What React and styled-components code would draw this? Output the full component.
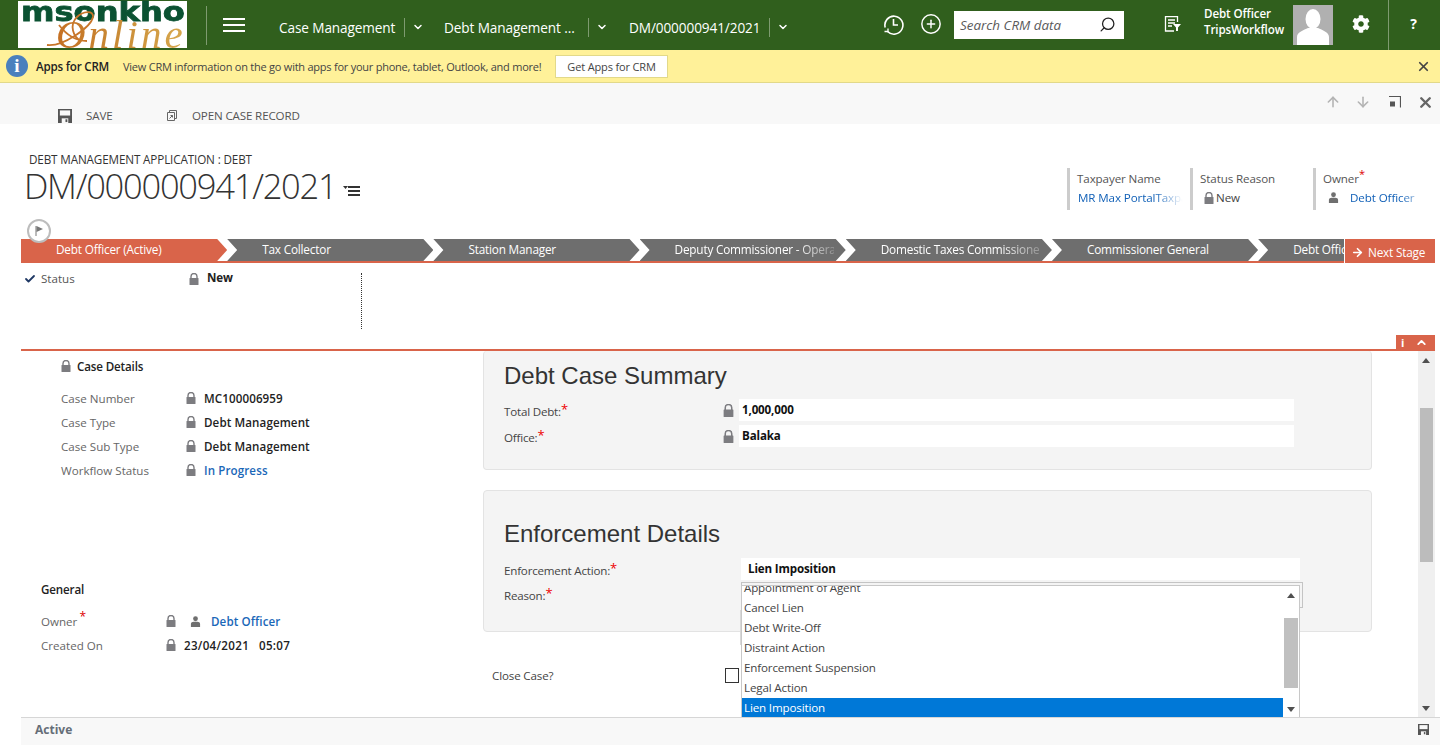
import styled, { createGlobalStyle } from "styled-components";
import { ArrowDown, ArrowRight, ArrowUp, Check, ChevronDown, ChevronUp, CirclePlus, Search, X } from "lucide-react";
import { FaCog } from "react-icons/fa";

const GlobalStyle = createGlobalStyle`
  html, body {
    margin: 0;
    padding: 0;
    background: #fff;
    overflow: hidden;
  }
  * {
    box-sizing: border-box;
  }
`;

const Page = styled.div`
  height: 100vh;
  display: flex;
  flex-direction: column;
  font-family: "Open Sans", "Liberation Sans", sans-serif;
  font-size: 11.6px;
  color: #444;
  position: relative;
`;

/* top nav */
const NavBar = styled.div`
  height: 50px;
  flex: none;
  background: #305f1d;
  display: flex;
  align-items: center;
  color: #fff;
`;

const Logo = styled.div`
  width: 169px;
  height: 47px;
  margin: 0 19px 1px 18px;
  background: #fff;
  position: relative;
  flex: none;
`;

const LogoTop = styled.span`
  position: absolute;
  left: 3px;
  top: 0;
  font-family: "DejaVu Sans", sans-serif;
  font-weight: 700;
  font-size: 27px;
  line-height: 22px;
  letter-spacing: 0;
  color: #0b5232;
  -webkit-text-stroke: 0.8px #0b5232;
  transform: scaleX(1.19);
  transform-origin: left center;
`;

const LogoScript = styled.span`
  position: absolute;
  left: 38px;
  top: 11px;
  height: 36px;
  font-family: "Liberation Serif", serif;
  font-style: italic;
  font-size: 41px;
  letter-spacing: 3px;
  line-height: 44px;
  background: linear-gradient(90deg, #c56f22, #c98a35 45%, #d8a94e);
  -webkit-background-clip: text;
  background-clip: text;
  color: transparent;
`;

const LogoSwoosh = styled.svg`
  position: absolute;
  left: 25px;
  top: 10px;
`;

const NavDivider = styled.div`
  width: 1px;
  height: 39px;
  background: #7e9b70;
  flex: none;
`;

const Burger = styled.div`
  width: 22px;
  height: 14px;
  margin: 0 34px 0 16px;
  border-top: 2px solid #fff;
  border-bottom: 2px solid #fff;
  position: relative;
  flex: none;
  &::after {
    content: "";
    position: absolute;
    left: 0;
    right: 0;
    top: 4px;
    height: 2px;
    background: #fff;
  }
`;

const Crumb = styled.div`
  width: ${(p) => p.$w}px;
  flex: none;
  font-size: 13.6px;
  display: flex;
  align-items: center;
  padding-top: 4px;
  white-space: nowrap;
  span {
    width: ${(p) => p.$text}px;
    letter-spacing: -0.1px;
  }
  i {
    width: 1px;
    height: 19px;
    background: #7e9b70;
    margin-right: 7px;
  }
`;

const NavIcon = styled.div`
  width: ${(p) => p.$w || 38}px;
  display: flex;
  align-items: center;
  justify-content: center;
  flex: none;
  margin-bottom: 2px;
`;

const SearchBox = styled.div`
  width: 170px;
  height: 28px;
  margin: 0 30px 1px 4px;
  background: #fff;
  color: #5a5a5a;
  font-style: italic;
  font-size: 13.4px;
  display: flex;
  align-items: center;
  justify-content: space-between;
  padding: 0 8px 0 6px;
  flex: none;
  svg {
    transform: scaleX(-1);
    color: #222;
  }
`;

const UserName = styled.div`
  width: 89px;
  margin-left: 12px;
  font-size: 11.6px;
  font-weight: 600;
  line-height: 16px;
  margin-bottom: 7px;
  letter-spacing: -0.1px;
  white-space: nowrap;
`;

const Avatar = styled.div`
  width: 40px;
  height: 40px;
  background: #b0b0b0;
  flex: none;
  overflow: hidden;
`;

const HelpCell = styled.div`
  width: 52px;
  height: 50px;
  border-left: 1px solid #7e9b70;
  display: flex;
  align-items: center;
  justify-content: center;
  font-weight: 700;
  font-size: 14px;
  padding-bottom: 4px;
  padding-right: 2px;
`;

/* notification bar */
const NoticeBar = styled.div`
  height: 33px;
  flex: none;
  background: #fff199;
  border-bottom: 1px solid #e2d98a;
  display: flex;
  align-items: center;
  padding-left: 6px;
  color: #444;
`;

const InfoDot = styled.div`
  width: 22px;
  height: 22px;
  border-radius: 50%;
  background: #4a80bd;
  color: #fff;
  font-family: "Liberation Serif", serif;
  font-weight: 700;
  font-size: 19px;
  line-height: 22px;
  text-align: center;
  flex: none;
`;

const NoticeTitle = styled.b`
  width: 87px;
  margin-left: 8px;
  flex: none;
  font-weight: 600;
  color: #222;
  letter-spacing: -0.2px;
  white-space: nowrap;
`;

const NoticeText = styled.span`
  width: 432px;
  flex: none;
  font-size: 11px;
  letter-spacing: -0.24px;
  white-space: nowrap;
`;

const NoticeButton = styled.div`
  width: 113px;
  height: 23px;
  background: #fff;
  border: 1px solid #e2d98a;
  display: flex;
  align-items: center;
  justify-content: center;
  font-size: 11px;
  letter-spacing: -0.15px;
  flex: none;
`;

const NoticeClose = styled(X)`
  margin-left: auto;
  margin-right: 9px;
  color: #444;
`;

/* command bar */
const CommandBar = styled.div`
  height: 41px;
  flex: none;
  background: #f8f8f8;
  display: flex;
  align-items: center;
  padding: 24px 6px 0 58px;
`;

const Command = styled.div`
  display: flex;
  align-items: center;
  width: ${(p) => p.$w}px;
  font-size: 11.6px;
  color: #555;
  white-space: nowrap;
  letter-spacing: -0.15px;
  svg {
    margin-right: ${(p) => p.$gap}px;
    flex: none;
  }
`;

const CommandRight = styled.div`
  margin-left: auto;
  margin-top: -27px;
  display: flex;
  align-items: center;
  gap: 14px;
  color: #b4b4b4;
`;

/* record header */
const RecordHeader = styled.div`
  height: 115px;
  flex: none;
  display: flex;
  padding: 28px 0 0 25px;
`;

const TitleBlock = styled.div`
  flex: 1;
`;

const EntityName = styled.div`
  font-size: 11.7px;
  line-height: 14px;
  margin-left: 4px;
  color: #333;
  letter-spacing: -0.14px;
  text-transform: uppercase;
`;

const RecordTitle = styled.h1`
  margin: 0 0 0 -1px;
  display: flex;
  align-items: center;
  font-weight: 300;
  font-size: 34.5px;
  line-height: 40px;
  color: #333;
  letter-spacing: -1.25px;
`;

const TitleMenu = styled.svg`
  margin: 10px 0 0 7px;
`;

const HeaderFields = styled.div`
  display: flex;
  padding: 16px 4px 0 0;
  height: 58px;
`;

const HeaderField = styled.div`
  width: 123px;
  height: 42px;
  border-left: 3px solid #ccc;
  padding: 1px 0 0 7px;
  font-size: 11.6px;
  line-height: 19px;
  color: #555;
  letter-spacing: -0.1px;
  sup {
    color: #d00;
    line-height: 0;
    font-size: 11px;
  }
`;

const HeaderValue = styled.div`
  display: flex;
  align-items: center;
  gap: ${(p) => p.$gap || 0}px;
  color: ${(p) => (p.$link ? "#1160b7" : "#444")};
  padding-left: ${(p) => p.$inset || 0}px;
  width: 110px;
  white-space: nowrap;
  overflow: hidden;
  mask-image: ${(p) => (p.$fade ? "linear-gradient(90deg, #000 70%, transparent 96%)" : "none")};
  -webkit-mask-image: ${(p) => (p.$fade ? "linear-gradient(90deg, #000 70%, transparent 96%)" : "none")};
`;

/* stage bar */
const StageBar = styled.div`
  height: 24px;
  flex: none;
  margin: 0 5px 0 21px;
  display: flex;
  border-bottom: 2px solid #d9644a;
  position: relative;
`;

const FlagBadge = styled.div`
  position: absolute;
  left: 6px;
  top: -20px;
  width: 24px;
  height: 24px;
  border-radius: 50%;
  border: 2px solid #bdbdbd;
  background: #fff;
  display: flex;
  align-items: center;
  justify-content: center;
  z-index: 1;
`;

const Stages = styled.div`
  flex: 1;
  display: flex;
  overflow: hidden;
`;

const Stage = styled.div`
  width: 206.2px;
  flex: none;
  height: 22px;
  padding-left: 35px;
  background: ${(p) => (p.$active ? "#d9644a" : "#6e6e6e")};
  color: #fff;
  line-height: 21px;
  font-size: 11.8px;
  letter-spacing: -0.2px;
  white-space: nowrap;
  clip-path: ${(p) =>
    p.$active
      ? "polygon(0 0, calc(100% - 10px) 0, 100% 50%, calc(100% - 10px) 100%, 0 100%)"
      : "polygon(0 0, calc(100% - 10px) 0, 100% 50%, calc(100% - 10px) 100%, 0 100%, 10px 50%)"};
`;

const StageLabel = styled.div`
  width: 159px;
  overflow: hidden;
  mask-image: ${(p) => (p.$fade ? "linear-gradient(90deg, #000 75%, rgba(0,0,0,0.25) 100%)" : "none")};
  -webkit-mask-image: ${(p) => (p.$fade ? "linear-gradient(90deg, #000 75%, rgba(0,0,0,0.25) 100%)" : "none")};
`;

const NextStage = styled.div`
  width: 91px;
  height: 24px;
  margin-bottom: -2px;
  flex: none;
  background: #d9644a;
  border-left: 1px solid #fff;
  color: #fff;
  display: flex;
  align-items: center;
  padding: 2px 0 0 6px;
  gap: 4px;
  font-size: 11.8px;
  letter-spacing: -0.2px;
  white-space: nowrap;
`;

/* status strip */
const StatusStrip = styled.div`
  height: 88px;
  flex: none;
  margin: 0 5px 0 21px;
  border-bottom: 2px solid #d9644a;
  position: relative;
  padding-top: 9px;
`;

const StatusField = styled.div`
  width: 341px;
  height: 56px;
  margin-top: 1px;
  border-right: 1px dotted #333;
  display: flex;
  align-items: flex-start;
  padding-left: 3px;
  line-height: 12px;
  color: #555;
`;

const StatusLabel = styled.span`
  width: 148px;
  margin-left: 5px;
`;

const StatusValue = styled.b`
  margin-left: 8px;
  margin-top: -1px;
  font-weight: 700;
  color: #222;
  letter-spacing: -0.2px;
`;

const StripTabs = styled.div`
  position: absolute;
  right: 0;
  bottom: 0;
  width: 39px;
  height: 14px;
  background: #d9644a;
  color: #fff;
  display: flex;
  align-items: center;
  font-size: 11px;
  font-weight: 700;
  padding-left: 5px;
  gap: 11px;
`;

/* main area */
const Main = styled.div`
  flex: 1;
  min-height: 0;
  margin: 0 5px 0 21px;
  display: flex;
  overflow: hidden;
`;

const SideColumn = styled.div`
  width: 462px;
  flex: none;
`;

const SideSection = styled.div`
  padding-left: ${(p) => p.$inset}px;
  margin-top: ${(p) => p.$top}px;
`;

const SideHeading = styled.div`
  display: flex;
  align-items: center;
  gap: 6px;
  height: 16px;
  font-weight: 600;
  color: #222;
  margin-bottom: 12px;
  letter-spacing: -0.15px;
`;

const SideRow = styled.div`
  display: flex;
  align-items: center;
  height: 24px;
`;

const SideLabel = styled.div`
  width: 125px;
  flex: none;
  color: #666;
  sup {
    color: #d00;
    line-height: 0;
    font-size: 12px;
    margin-left: 2px;
  }
`;

const SideValue = styled.div`
  margin-left: ${(p) => p.$gap}px;
  font-weight: 600;
  letter-spacing: ${(p) => p.$track || 0.1}px;
  color: ${(p) => (p.$link ? "#1a67b8" : "#222")};
  white-space: nowrap;
`;

const FormColumn = styled.div`
  flex: 1;
  min-width: 0;
`;

const Panel = styled.section`
  width: 889px;
  height: ${(p) => p.$h}px;
  margin-top: ${(p) => p.$top || 0}px;
  padding: ${(p) => p.$pad}px 20px 0;
  background: #f4f4f4;
  border: 1px solid #e3e3e3;
  border-top-width: ${(p) => (p.$cut ? 0 : 1)}px;
  border-radius: 4px;
`;

const PanelTitle = styled.h2`
  margin: 0 0 ${(p) => p.$gap}px;
  font-family: "Liberation Sans", sans-serif;
  font-weight: 400;
  font-size: 24px;
  line-height: 30px;
  color: #333;
`;

const FormRow = styled.div`
  display: flex;
  align-items: center;
  height: 22px;
  margin-bottom: 4px;
`;

const FormLabel = styled.div`
  width: ${(p) => p.$w}px;
  flex: none;
  font-size: 11.6px;
  color: #444;
  letter-spacing: -0.2px;
  padding-top: ${(p) => p.$pt || 2}px;
  sup {
    color: #e00;
    font-size: 13px;
    line-height: 0;
    vertical-align: 2px;
  }
`;

const ValueBox = styled.div`
  width: ${(p) => p.$w}px;
  height: 22px;
  margin-left: ${(p) => p.$gap || 0}px;
  padding-left: ${(p) => p.$inset}px;
  background: #fff;
  font-weight: 700;
  font-size: 11.6px;
  line-height: 21px;
  color: #111;
  letter-spacing: -0.15px;
  flex: none;
`;

const ReasonRow = styled.div`
  display: flex;
  height: 26px;
  margin-top: -2px;
  position: relative;
`;

const ReasonSelect = styled.div`
  width: 562px;
  height: 26px;
  border: 1px solid #c4c4c4;
  background: #f4f4f4;
  position: relative;
  flex: none;
`;

const BehindBox = styled.div`
  position: absolute;
  left: -2px;
  top: 27px;
  width: 4px;
  height: 35px;
  border-left: 1px solid #d8d8d8;
`;

const Dropdown = styled.div`
  position: absolute;
  left: -1px;
  top: 2px;
  width: 559px;
  height: 160px;
  background: #fff;
  border: 1px solid #c8c8c8;
  display: flex;
  overflow: hidden;
  z-index: 2;
`;

const OptionList = styled.div`
  flex: 1;
  margin-top: -8px;
`;

const Option = styled.div`
  height: 20px;
  line-height: 20px;
  padding-left: 2px;
  font-size: 11.6px;
  letter-spacing: -0.15px;
  color: ${(p) => (p.$selected ? "#fff" : "#444")};
  background: ${(p) => (p.$selected ? "#0078d7" : "#fff")};
`;

const ListScroll = styled.div`
  width: 16px;
  flex: none;
  height: 132px;
  position: relative;
`;

const ListThumb = styled.div`
  position: absolute;
  left: 1px;
  top: 32px;
  width: 14px;
  height: 70px;
  background: #c0c0c0;
`;

const Arrow = styled.div`
  position: absolute;
  left: ${(p) => p.$left}px;
  ${(p) => (p.$down ? `bottom: ${p.$pos}px;` : `top: ${p.$pos}px;`)}
  width: 0;
  height: 0;
  border-left: 4px solid transparent;
  border-right: 4px solid transparent;
  ${(p) => (p.$down ? "border-top: 5px solid #505050;" : "border-bottom: 5px solid #505050;")}
`;

const CloseRow = styled.div`
  display: flex;
  align-items: center;
  margin: 35px 0 0 9px;
  height: 16px;
  font-size: 11.6px;
  color: #444;
  letter-spacing: -0.15px;
`;

const CloseLabel = styled.span`
  width: 233px;
`;

const CheckBox = styled.div`
  width: 14px;
  height: 15px;
  border: 1px solid #333;
  background: #fff;
`;

const PageScroll = styled.div`
  width: 17px;
  flex: none;
  background: #f0f0f0;
  position: relative;
`;

const PageThumb = styled.div`
  position: absolute;
  left: 2px;
  top: 57px;
  width: 13px;
  height: 154px;
  background: #bcbcbc;
`;

const Footer = styled.div`
  flex: none;
  height: 28px;
  margin-left: 21px;
  background: #f8f8f8;
  border-top: 1px solid #d6d6d6;
  display: flex;
  align-items: center;
  justify-content: space-between;
  padding: 0 11px 4px 14px;
  font-weight: 700;
  color: #666e78;
  font-size: 12px;
`;

const Spacer = styled.span`
  width: 14px;
  flex: none;
`;

const Lock = ({ size = 11 }) => (
  <svg width={size - 1} height={size + 1} viewBox="0 0 10 12" style={{ flex: "none" }}>
    <path d="M2 5.500V3.500a3 3 0 0 1 6 0v2" fill="none" stroke="#7c7c80" strokeWidth="1.4" />
    <rect x="0.5" y="5" width="9" height="7" rx="0.5" fill="#7c7c80" />
  </svg>
);

const Person = ({ color = "#6f6f6f", size = 12 }) => (
  <svg width={size} height={size} viewBox="0 0 12 12" style={{ flex: "none" }}>
    <circle cx="6" cy="3" r="2.6" fill={color} />
    <path d="M1 12V8.800C1 7.200 2.400 6.400 4 6.400h4c1.600 0 3 .8 3 2.400V12z" fill={color} />
  </svg>
);

const SaveIcon = ({ size = 14, color = "#555" }) => (
  <svg width={size} height={size} viewBox="0 0 15 15">
    <path d="M0 0h15v15H0z" fill={color} />
    <path d="M2 1.500h11v5.500H2z" fill="#f8f8f8" />
    <path d="M4 10h7v5H4z" fill="#f8f8f8" />
    <path d="M8 11h2v3H8z" fill={color} />
  </svg>
);

const stages = [
  { name: "Debt Officer (Active)", active: true },
  { name: "Tax Collector" },
  { name: "Station Manager" },
  { name: "Deputy Commissioner - Operations", fade: true },
  { name: "Domestic Taxes Commissioner", fade: true },
  { name: "Commissioner General" },
  { name: "Debt Officer" },
];

const caseRows = [
  ["Case Number", "MC100006959"],
  ["Case Type", "Debt Management"],
  ["Case Sub Type", "Debt Management"],
  ["Workflow Status", "In Progress", true],
];

const reasons = [
  "Appointment of Agent",
  "Cancel Lien",
  "Debt Write-Off",
  "Distraint Action",
  "Enforcement Suspension",
  "Legal Action",
  "Lien Imposition",
  "Other",
];

const App = () => {
  return (
    <Page>
      <GlobalStyle />
      <NavBar>
        <Logo>
          <LogoTop>msonkho</LogoTop>
          <LogoSwoosh width="60" height="37" viewBox="0 0 60 37" fill="none">
            <path
              d="M4 34C20 36 48 16 50 6C51 -1 40 0 34 6C26 14 30 26 38 30M16 14C22 22 32 30 44 30"
              stroke="#c8762a"
              strokeWidth="1.8"
            />
          </LogoSwoosh>
          <LogoScript>Online</LogoScript>
        </Logo>
        <NavDivider />
        <Burger />
        <Crumb $w={165} $text={125}>
          <span>Case Management</span>
          <i />
          <ChevronDown size={12} strokeWidth={3} />
        </Crumb>
        <Crumb $w={185} $text={144}>
          <span>Debt Management ...</span>
          <i />
          <ChevronDown size={12} strokeWidth={3} />
        </Crumb>
        <Crumb $w={245} $text={140}>
          <span>DM/000000941/2021</span>
          <i />
          <ChevronDown size={12} strokeWidth={3} />
        </Crumb>
        <NavIcon>
          <svg width="21" height="21" viewBox="0 0 21 21" fill="none" stroke="#fff" strokeWidth="1.6">
            <path d="M4.500 17.500A9 9 0 1 0 2.200 13.500" />
            <path d="M1.500 17.500h3.500v-3" strokeWidth="1.3" />
            <path d="M10.500 5v6h4.500" />
          </svg>
        </NavIcon>
        <NavIcon>
          <CirclePlus size={22} strokeWidth={1.6} />
        </NavIcon>
        <SearchBox>
          Search CRM data
          <Search size={17} strokeWidth={1.8} />
        </SearchBox>
        <NavIcon $w={38}>
          <svg width="18" height="16" viewBox="0 0 18 16" fill="none" stroke="#fff">
            <path d="M10 15H1.500V.5h12V6" strokeWidth="1.3" />
            <path d="M4 4h7M4 7h7M4 10h4" strokeWidth="1.3" />
            <path d="M9 8h8l-3 3.500V15h-2v-3.500z" fill="#fff" stroke="none" />
          </svg>
        </NavIcon>
        <UserName>
          <div>Debt Officer</div>
          <div>TripsWorkflow</div>
        </UserName>
        <Avatar>
          <svg width="40" height="40" viewBox="0 0 40 40">
            <ellipse cx="20" cy="14" rx="7.500" ry="10" fill="#fff" />
            <path d="M4 40V32C4 27 11 25 15 23H25C29 25 36 27 36 32V40z" fill="#fff" />
          </svg>
        </Avatar>
        <NavIcon $w={55}>
          <FaCog size={18} />
        </NavIcon>
        <HelpCell>?</HelpCell>
      </NavBar>

      <NoticeBar>
        <InfoDot>i</InfoDot>
        <NoticeTitle>Apps for CRM</NoticeTitle>
        <NoticeText>View CRM information on the go with apps for your phone, tablet, Outlook, and more!</NoticeText>
        <NoticeButton>Get Apps for CRM</NoticeButton>
        <NoticeClose size={15} strokeWidth={2.8} />
      </NoticeBar>

      <CommandBar>
        <Command $w={109} $gap={14}>
          <SaveIcon />
          SAVE
        </Command>
        <Command $w={140} $gap={15}>
          <svg width="10" height="11" viewBox="0 0 10 11" fill="none" stroke="#666">
            <path d="M2.500 2.500V.5h7v8h-2M.5 2.500h7v8h-7zM2.500 8.500l3-3M3.500 5.500h2v2" />
          </svg>
          OPEN CASE RECORD
        </Command>
        <CommandRight>
          <ArrowUp size={16} strokeWidth={2.4} />
          <ArrowDown size={16} strokeWidth={2.4} />
          <svg width="14" height="14" viewBox="0 0 14 14" style={{ margin: "0 2px 0 2px" }}>
            <path d="M2 1.500h11.500v11" fill="none" stroke="#555" strokeWidth="1.2" />
            <path d="M3 6.500h5v5H3z" fill="#555" />
          </svg>
          <X size={17} strokeWidth={3.4} color="#666" />
        </CommandRight>
      </CommandBar>

      <RecordHeader>
        <TitleBlock>
          <EntityName>Debt Management Application : Debt</EntityName>
          <RecordTitle>
            DM/000000941/2021
            <TitleMenu width="17" height="12" viewBox="0 0 17 12">
              <path d="M0 1h5L2.500 4z" fill="#333" />
              <path d="M5 1h12v2H5zM5 5h12v2H5zM5 9h12v2H5z" fill="#333" />
            </TitleMenu>
          </RecordTitle>
        </TitleBlock>
        <HeaderFields>
          <HeaderField>
            Taxpayer Name
            <HeaderValue $link $fade $inset={1}>
              MR Max PortalTaxpayer
            </HeaderValue>
          </HeaderField>
          <HeaderField>
            Status Reason
            <HeaderValue $inset={4} $gap={2}>
              <Lock />
              New
            </HeaderValue>
          </HeaderField>
          <HeaderField>
            Owner<sup>*</sup>
            <HeaderValue $link $fade $inset={5} $gap={11}>
              <Person size={11} />
              Debt Officer
            </HeaderValue>
          </HeaderField>
        </HeaderFields>
      </RecordHeader>

      <StageBar>
        <FlagBadge>
          <svg width="10" height="12" viewBox="0 0 10 12">
            <path d="M2 1v10" stroke="#777" strokeWidth="1" />
            <path d="M2.500 1L9 4 2.500 7z" fill="#777" />
          </svg>
        </FlagBadge>
        <Stages>
          {stages.map((s) => (
            <Stage key={s.name} $active={s.active}>
              <StageLabel $fade={s.fade}>{s.name}</StageLabel>
            </Stage>
          ))}
        </Stages>
        <NextStage>
          <ArrowRight size={13} strokeWidth={3} />
          Next Stage
        </NextStage>
      </StageBar>

      <StatusStrip>
        <StatusField>
          <Check size={12} strokeWidth={3.6} color="#1f3864" />
          <StatusLabel>Status</StatusLabel>
          <Lock />
          <StatusValue>New</StatusValue>
        </StatusField>
        <StripTabs>
          i
          <ChevronUp size={13} strokeWidth={3.4} />
        </StripTabs>
      </StatusStrip>

      <Main>
        <SideColumn>
          <SideSection $inset={40} $top={7}>
            <SideHeading>
              <Lock />
              Case Details
            </SideHeading>
            {caseRows.map(([label, value, link]) => (
              <SideRow key={label}>
                <SideLabel>{label}</SideLabel>
                <Lock />
                <SideValue $gap={8} $link={link}>
                  {value}
                </SideValue>
              </SideRow>
            ))}
          </SideSection>
          <SideSection $inset={20} $top={99}>
            <SideHeading>General</SideHeading>
            <SideRow>
              <SideLabel>
                Owner<sup>*</sup>
              </SideLabel>
              <Lock />
              <Spacer />
              <Person size={11} />
              <SideValue $gap={10} $link>
                Debt Officer
              </SideValue>
            </SideRow>
            <SideRow>
              <SideLabel>Created On</SideLabel>
              <Lock />
              <SideValue $gap={8} $track={0.3}>
                23/04/2021&nbsp;&nbsp;&nbsp;05:07
              </SideValue>
            </SideRow>
          </SideSection>
        </SideColumn>

        <FormColumn>
          <Panel $h={119} $pad={10} $cut>
            <PanelTitle $gap={8}>Debt Case Summary</PanelTitle>
            <FormRow>
              <FormLabel $w={219}>
                Total Debt:<sup>*</sup>
              </FormLabel>
              <Lock size={12} />
              <ValueBox $w={555} $gap={5} $inset={3}>
                1,000,000
              </ValueBox>
            </FormRow>
            <FormRow>
              <FormLabel $w={219}>
                Office:<sup>*</sup>
              </FormLabel>
              <Lock size={12} />
              <ValueBox $w={555} $gap={5} $inset={3}>
                Balaka
              </ValueBox>
            </FormRow>
          </Panel>

          <Panel $h={142} $top={20} $pad={28}>
            <PanelTitle $gap={9}>Enforcement Details</PanelTitle>
            <FormRow>
              <FormLabel $w={237}>
                Enforcement Action:<sup>*</sup>
              </FormLabel>
              <ValueBox $w={559} $inset={7}>
                Lien Imposition
              </ValueBox>
            </FormRow>
            <ReasonRow>
              <FormLabel $w={237} $pt={6}>
                Reason:<sup>*</sup>
              </FormLabel>
              <ReasonSelect>
                <BehindBox />
                <Dropdown>
                  <OptionList>
                    {reasons.map((r) => (
                      <Option key={r} $selected={r === "Lien Imposition"}>
                        {r}
                      </Option>
                    ))}
                  </OptionList>
                  <ListScroll>
                    <Arrow $left={4} $pos={7} />
                    <ListThumb />
                    <Arrow $left={4} $pos={6} $down />
                  </ListScroll>
                </Dropdown>
              </ReasonSelect>
            </ReasonRow>
          </Panel>

          <CloseRow>
            <CloseLabel>Close Case?</CloseLabel>
            <CheckBox />
          </CloseRow>
        </FormColumn>

        <PageScroll>
          <Arrow $left={4} $pos={7} />
          <PageThumb />
          <Arrow $left={4} $pos={6} $down />
        </PageScroll>
      </Main>

      <Footer>
        Active
        <SaveIcon size={11} color="#555" />
      </Footer>
    </Page>
  );
};

export default App;
